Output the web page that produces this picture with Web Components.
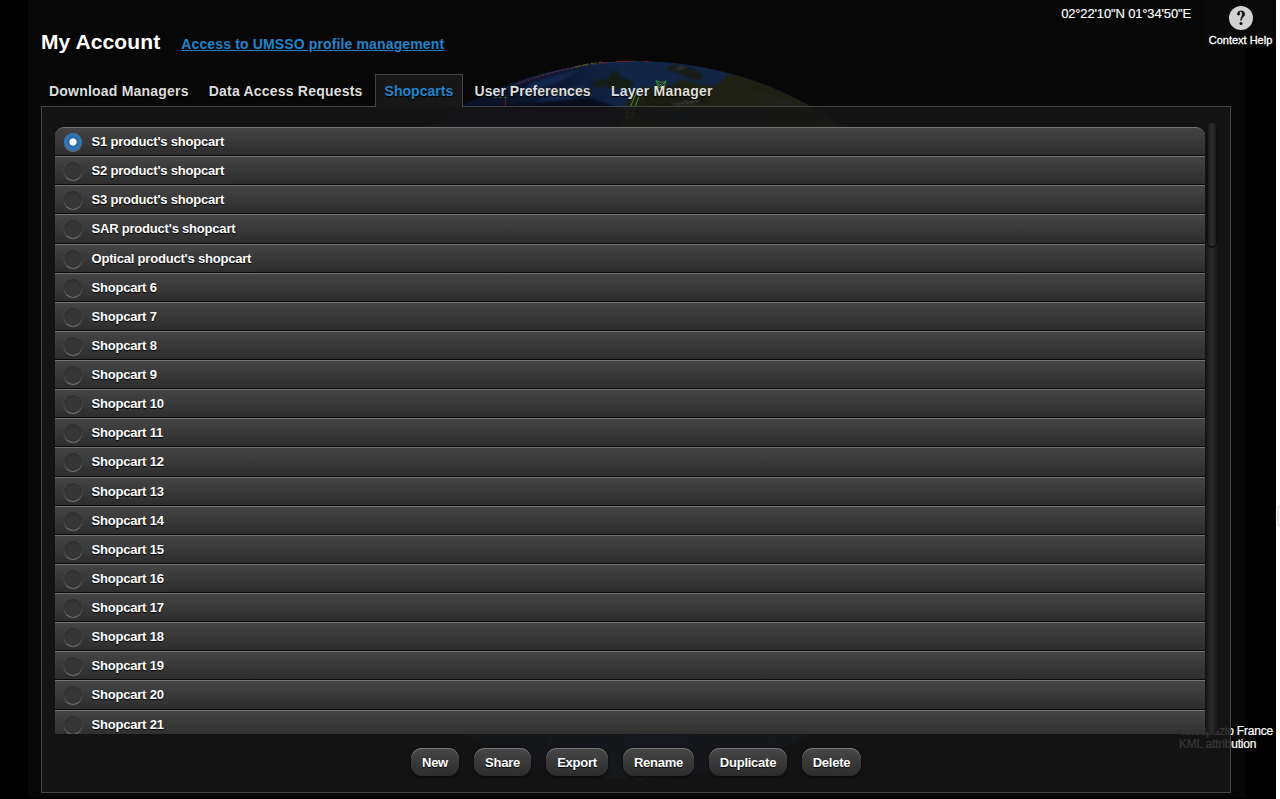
<!DOCTYPE html>
<html lang="en">
<head>
<meta charset="utf-8">
<title>My Account</title>
<style>
html,body{margin:0;height:100%;overflow:hidden;background:#fff}
body{font-family:"Liberation Sans",Arial,sans-serif;color:#fff}
</style>
</head>
<body>
<account-app></account-app>
<script>
const define=(name,html,setup)=>customElements.define(name,class extends HTMLElement{
  constructor(){super();this.attachShadow({mode:'open'}).innerHTML=html;}
  connectedCallback(){if(setup)setup(this,this.shadowRoot);}
});

define('globe-view',`<style>
:host{display:block;position:absolute;inset:0;z-index:0}
svg{display:block;width:100%;height:100%}
</style>
<svg viewBox="0 0 1276 799" preserveAspectRatio="none">
<defs>
<clipPath id="ball"><circle cx="636" cy="420" r="359"/></clipPath>
<linearGradient id="sea" gradientUnits="userSpaceOnUse" x1="440" x2="860" y1="0" y2="0"><stop offset="0" stop-color="#0a1122"/><stop offset=".25" stop-color="#0c1630"/><stop offset=".45" stop-color="#112646"/><stop offset="1" stop-color="#10233e"/></linearGradient>
<filter id="soft" x="-20%" y="-20%" width="140%" height="140%" color-interpolation-filters="sRGB"><feGaussianBlur stdDeviation="1.3"/></filter>
</defs>
<rect width="1276" height="799" fill="#000"/>
<rect x="28" width="1217" height="797" fill="#070707"/>
<g clip-path="url(#ball)">
<rect x="260" y="50" width="760" height="740" fill="url(#sea)"/>
<g filter="url(#soft)">
<path d="M530 83L560 74L580 70L560 82L518 97ZM555 93L590 82L570 100L520 108Z" fill="#11264a"/>
<path d="M430 112L540 102L590 98L625 110L632 140L430 140Z" fill="#090c1c"/>
<path d="M592 84L599 79L607 80L611 72L617 71L620 78L629 79L634 84L626 91L612 88L604 87L594 87Z" fill="#151d17"/>
<path d="M665 71L671 65L683 65L701 72L704 79L694 80L684 76L674 71Z" fill="#181c18"/>
<path d="M674 69L681 65L686 68L680 71Z" fill="#2c302f"/>
<path d="M625 108L627 99L638 88L651 87L673 85L681 79L697 84L710 86L722 82L728 75L745 75L785 85L840 114L890 151L750 145L620 135Z" fill="#1e2014"/>
<path d="M650 91L675 86L700 91L710 102L672 108L643 105Z" fill="#181b10"/>
<path d="M750 91L790 100L845 130L780 119Z" fill="#22221a"/>
<path d="M671 102L702 99L696 106L673 107Z" fill="#25251f"/>
<path d="M640 115L680 112L720 118L770 117L760 122L690 122Z" fill="#11192c"/>
</g>
<path d="M676 104l12-1 7-2 6 1M684 101l8 1" fill="none" stroke="#44443d" stroke-width=".8" stroke-dasharray="3 2"/>
</g>
<path d="M500 91Q555 64 636 61" fill="none" stroke="#2d4770" stroke-width=".5"/>
<path d="M518 84Q557 70 588 65" fill="none" stroke="#781b2c" stroke-dasharray="3 2"/>
<path d="M575 67L588 64 602 62" fill="none" stroke="#496119" stroke-dasharray="6 2"/>
<path d="M601 62.5h8m7-1h15m12 0h6" stroke="#781515"/>
<path d="M505.5 98v8" stroke="#751320"/><path d="M494 97.5h13" stroke="#315519" stroke-dasharray="3 2"/>
<path d="M655.500 80.500l6 2 4-1-5 5-4-5 2 6h6l1-7M661 84l-5 5M661 86l4 3M636 93l-10 25M639 96l-8 22M625 118h6" fill="none" stroke="#3b8a33"/>
<path d="M751 123l2 3M755 121l3 4M549 741h9M765 745l12-7M610 768h8M635 780h10" stroke="#405a20" fill="none"/>
</svg>`);

define('map-attribution',`<style>
:host{position:absolute;right:2px;top:725px;width:94px;font-size:12px;line-height:13px;letter-spacing:-.2px;color:#fff;z-index:0;white-space:nowrap;-webkit-text-stroke:.2px #fff}
div{margin-left:-1px}
div+div{margin-left:-1px}
</style><div><slot name="source"></slot></div><div><slot name="layer"></slot></div>`);

define('context-help',`<style>
:host{display:flex;flex-direction:column;align-items:center;box-sizing:border-box;width:71px;height:46px;padding-top:6px;background:#090909;font-size:11px;line-height:14px;white-space:nowrap;-webkit-text-stroke:.3px #fff}
svg{display:block;flex:none;width:24px;height:24px;margin-bottom:3px}
</style><svg viewBox="0 0 24 24"><circle cx="12" cy="12" r="12" fill="#d2d2d2"/><path d="M8.300 8.200C8.300 6 9.900 4.700 12 4.700c2.300 0 3.900 1.300 3.900 3.400 0 2.700-3.200 3.100-3.400 6.400h-.9c-.1-3.300 1.600-3.900 1.600-6.300 0-1.600-.5-2.600-1.500-2.600-.9 0-1.200.5-1 1.400.3 1.500-.2 2.300-1.100 2.300-.8 0-1.300-.4-1.300-1.100z" fill="#090909" stroke="#090909" stroke-width=".3"/><circle cx="12" cy="17.500" r="1.500" fill="#090909"/></svg><slot></slot>`);

define('account-tab',`<style>
:host{display:flex;box-sizing:border-box;height:33px;padding:0 9px;border:1px solid transparent;border-bottom:0;font-weight:bold;font-size:14px;line-height:33px;letter-spacing:.21px;color:#ddd;text-shadow:0 1px 1px #000;white-space:nowrap}
:host([active]){background:#171717;border-color:#444;color:#2384cb;letter-spacing:.02px;width:88px;margin-left:2px}
:host(.preferences){letter-spacing:.05px;padding:0 9.500px 0 11px}
</style><slot></slot>`);

define('action-button',`<style>
:host{display:flex;box-sizing:border-box;height:28px;align-items:center;justify-content:center;border-radius:11px;background:linear-gradient(#474747,#2c2c2c);box-shadow:inset 0 1px #777,0 1px 3px #000a;font-weight:bold;font-size:13px;letter-spacing:-.25px;text-shadow:0 1px 1px #000;white-space:nowrap}
</style><slot></slot>`);

define('radio-row',`<style>
:host{display:flex;flex:none;align-items:flex-start;box-sizing:border-box;height:29.13px;padding-left:9px;border-top:1px solid #747474;border-bottom:1px solid #090909;background:linear-gradient(#444,#2d2d2d);font-weight:bold;font-size:13px;line-height:27px;letter-spacing:-.2px;text-shadow:0 1px 1px #000;white-space:nowrap}
:host(:first-of-type){border-radius:9px 9px 0 0}
i{box-sizing:border-box;width:18px;height:18px;margin:5px 9.5px 0 0;border-radius:50%;background:#363636;box-shadow:0 1px 1px -.2px #888,inset 0 1px 2px #2227}
:host([checked]) i{background:radial-gradient(circle,#fff 0 3.2px,#2768aa 4px,#3978b7 8px);box-shadow:0 1px 1px #777}
</style><i></i><span><slot></slot></span>`);

define('scroll-bar',`<style>
:host{display:block;width:12px;height:613px;border-radius:6px;background:linear-gradient(90deg,#151515,#2a2a2a 45%,#151515)}
div{box-sizing:border-box;height:127px;border-radius:6px;border:2px solid #101010;background:linear-gradient(90deg,#1d1d1d,#2e2e2e 50%,#1d1d1d)}
</style><div></div>`);

define('shopcart-list',`<style>
:host{display:flex;flex-direction:column;width:1150px;height:607px;overflow:hidden;margin-top:6px}
</style>`,(el,root)=>{
  const names=["S1 product's shopcart","S2 product's shopcart","S3 product's shopcart","SAR product's shopcart","Optical product's shopcart"];
  for(let n=6;n<=21;n++)names.push('Shopcart '+n);
  names.forEach((t,i)=>{const r=document.createElement('radio-row');r.textContent=t;if(!i)r.setAttribute('checked','');root.append(r);});
});

define('account-panel',`<style>
:host{display:flex;flex-direction:column;box-sizing:border-box;width:1190px;height:687px;border:1px solid #444;background:rgba(22,22,22,.87)}
.body{display:flex;padding:14px 0 0 13px}
scroll-bar{margin-left:1px}
.actions{display:flex;gap:15px;margin:14px 0 0 369px}
</style>
<div class="body"><shopcart-list></shopcart-list><scroll-bar></scroll-bar></div>
<div class="actions">
<action-button style="width:48px">New</action-button><action-button style="width:57px">Share</action-button><action-button style="width:62px">Export</action-button><action-button style="width:71px">Rename</action-button><action-button style="width:78px">Duplicate</action-button><action-button style="width:59px">Delete</action-button>
</div>`);

define('account-header',`<style>
:host{display:flex;align-items:flex-start;height:74px;padding-left:41px;box-sizing:border-box}
h1{margin:30px 21px 0 0;font-size:21px;line-height:24px;letter-spacing:.1px}
a{margin-top:36px;font-size:14px;line-height:16px;font-weight:bold;letter-spacing:.14px;color:#2384cb;text-decoration:underline}
.coords{margin:5px 14px 0 auto;font-size:13px;line-height:17px;letter-spacing:-.15px;-webkit-text-stroke:.15px #fff}
</style><h1>My Account</h1><a>Access to UMSSO profile management</a><span class="coords">02°22'10"N 01°34'50"E</span><context-help>Context Help</context-help>`);

define('account-app',`<style>
:host{display:block;position:relative;width:1276px;height:799px;overflow:visible}
main{position:relative;z-index:1}
nav{display:flex;height:32px;padding-left:39px}
account-panel{margin-left:41px}
.handle{position:absolute;left:1277px;top:505px;width:8px;height:20px;border:1px solid #ddd;border-radius:3px;background:#f2f2f2}
</style>
<globe-view></globe-view>
<map-attribution><span slot="source">Telespazio France</span><span slot="layer">KML attribution</span></map-attribution>
<main><account-header></account-header>
<nav><account-tab>Download Managers</account-tab><account-tab>Data Access Requests</account-tab><account-tab active>Shopcarts</account-tab><account-tab class="preferences">User Preferences</account-tab><account-tab>Layer Manager</account-tab></nav>
<account-panel></account-panel></main>
<div class="handle"></div>`);
</script>
</body>
</html>
